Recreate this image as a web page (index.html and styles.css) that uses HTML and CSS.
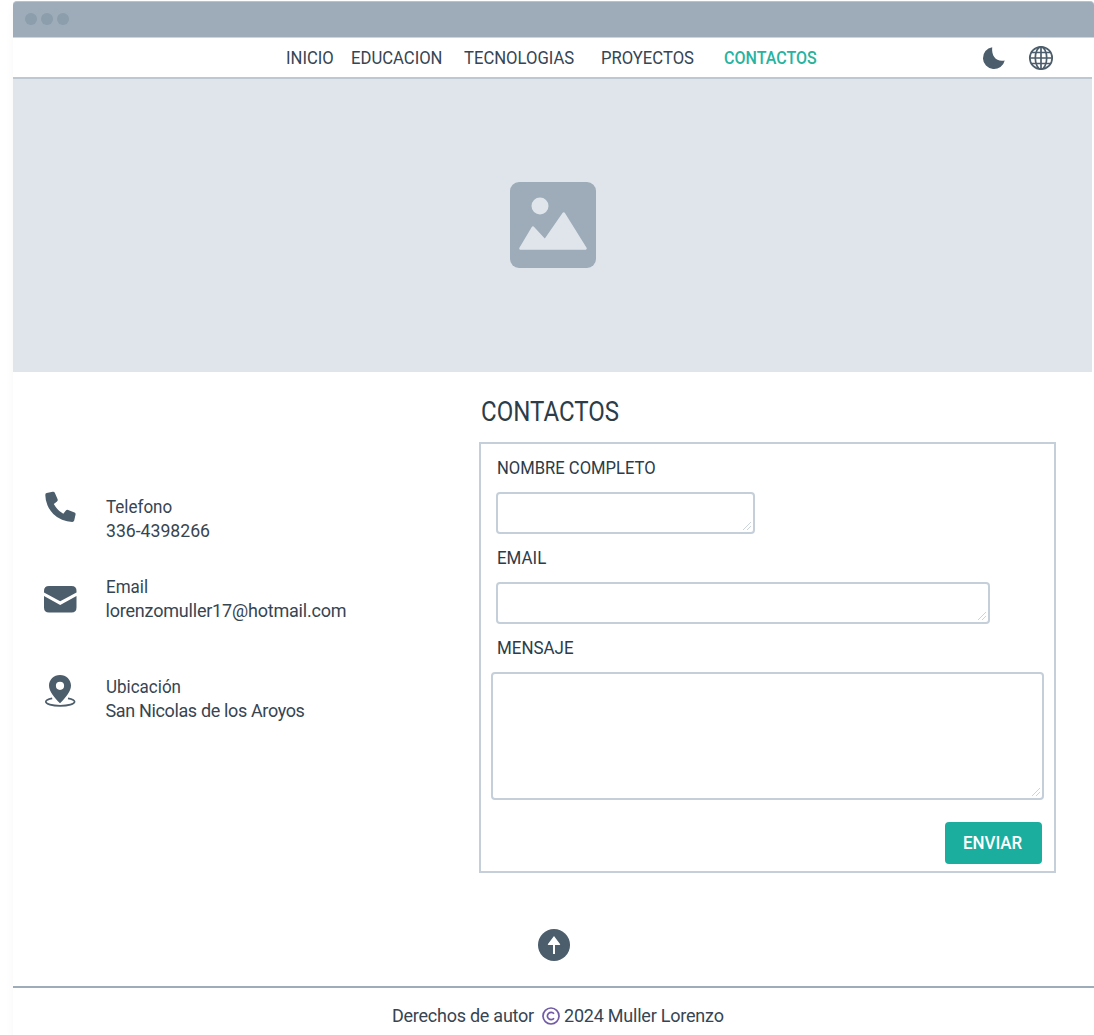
FILE: index.html
```html
<!DOCTYPE html>
<html lang="es">
<head>
<meta charset="utf-8">
<title>Contactos</title>
<link rel="stylesheet" href="styles.css">
</head>
<body>
<div class="window">
  <div class="titlebar"><i></i><i></i><i></i></div>
  <header class="nav">
    <nav class="links">
      <a class="inicio">INICIO</a>
      <a class="educacion">EDUCACION</a>
      <a class="tecnologias">TECNOLOGIAS</a>
      <a class="proyectos">PROYECTOS</a>
      <a class="active">CONTACTOS</a>
    </nav>
    <div class="tools">
      <svg width="24" height="24" viewBox="0 0 24 24"><path fill="currentColor" d="M10.200 1.200A11 11 0 1 0 22.700 14.400C14.500 16 9.300 10.500 10.200 1.200Z"/></svg>
      <svg width="26" height="26" viewBox="0 0 26 26" fill="none" stroke="currentColor" stroke-width="1.7"><circle cx="13" cy="13" r="11.2"/><ellipse cx="13" cy="13" rx="5.700" ry="11.200"/><path d="M13 1.800v22.400M1.800 13h22.400M3.500 7.500h19M3.500 18.500h19"/></svg>
    </div>
  </header>
  <section class="hero">
    <svg width="86" height="86" viewBox="0 0 86 86"><rect width="86" height="86" rx="9" fill="#9dacb8"/><circle cx="30" cy="24" r="8.500" fill="#e0e5ec"/><path d="M10.500 66.500 23 45.500 35 58.500 53.700 31.500 75.500 66.500Z" fill="#e0e5ec" stroke="#e0e5ec" stroke-width="2.500" stroke-linejoin="round"/></svg>
  </section>
  <main class="content">
    <ul class="contact-list">
      <li class="phone">
        <svg width="34" height="34" viewBox="0 0 34 34"><path fill="currentColor" d="M3.700 3.100 9.700 1.700Q11.200 1.400 11.800 2.800L14.600 9.200Q15.100 10.500 14 11.400L10.800 14.100Q14.300 20.600 20.300 23.700L22.900 20.400Q23.800 19.300 25.100 19.900L31.500 22.600Q32.900 23.200 32.500 24.700L31.200 30.600Q30.800 32 29.300 32A27.500 27.500 0 0 1 2.300 4.900Q2.300 3.400 3.700 3.100Z"/></svg>
        <p><span class="label">Telefono</span><span class="number">336-4398266</span></p>
      </li>
      <li class="mail">
        <svg width="34" height="34" viewBox="0 0 34 34"><g fill="currentColor"><path d="M1 10.500V9Q1 4 6 4H28.500Q33.500 4 33.500 9V10.500L17.200 19.200Z"/><path d="M1 13.900 17.200 23 33.500 13.900V25.500Q33.500 30.500 28.500 30.500H6Q1 30.500 1 25.500Z"/></g></svg>
        <p><span class="label">Email</span><span class="address">lorenzomuller17@hotmail.com</span></p>
      </li>
      <li class="place">
        <svg width="34" height="34" viewBox="0 0 34 34"><path fill="currentColor" fill-rule="evenodd" d="M17 1C10.800 1 6 5.700 6 11.600C6 17.500 11.500 24 17 29.300C22.500 24 28 17.500 28 11.600C28 5.700 23.200 1 17 1ZM17 7.700A4.100 4.100 0 1 1 17 15.900A4.100 4.100 0 1 1 17 7.700Z"/><path d="M9.200 24.300C5 25.100 2.800 26.300 2.800 27.700C2.800 30 9 31.800 17.200 31.800S31.600 30 31.600 27.700C31.600 26.300 29.200 25.100 25 24.300" fill="none" stroke="currentColor" stroke-width="1.700"/></svg>
        <p><span class="label">Ubicación</span><span class="city">San Nicolas de los Aroyos</span></p>
      </li>
    </ul>
    <section class="contact">
      <h1><span>CONTACTOS</span></h1>
      <form>
        <label for="name" class="name-label">NOMBRE COMPLETO</label>
        <div class="field short" id="name"><svg width="10" height="10"><path d="M1 9 9 1M5 9 9 5"/></svg></div>
        <label for="email">EMAIL</label>
        <div class="field" id="email"><svg width="10" height="10"><path d="M1 9 9 1M5 9 9 5"/></svg></div>
        <label for="message">MENSAJE</label>
        <div class="field message" id="message"><svg width="10" height="10"><path d="M1 9 9 1M5 9 9 5"/></svg></div>
        <button type="button"><span>ENVIAR</span></button>
      </form>
    </section>
  </main>
  <div class="to-top"><svg width="32" height="32" viewBox="0 0 32 32"><circle cx="16" cy="16" r="16" fill="#4c5d6b"/><path fill="#fff" d="M16 7 22.200 15.200Q22.300 16 21.500 16H17V25H15V16H10.500Q9.700 16 9.800 15.200Z"/></svg></div>
  <footer>
    <span class="rights">Derechos de autor</span>
    <svg width="18" height="18" viewBox="0 0 18 18" fill="none" stroke="#715ba5" stroke-width="1.700"><circle cx="9" cy="9" r="8"/><path d="M12 6.700A3.700 3.700 0 1 0 12 11.300"/></svg>
    <span class="owner">2024 Muller Lorenzo</span>
  </footer>
</div>
</body>
</html>
```
FILE: styles.css
```css
* { box-sizing: border-box; }
body {
  margin: 0;
  padding: 1px 0 0 13px;
  height: 1035px;
  overflow: hidden;
  background: #fff;
  color: #364552;
  font: 18px/24px Roboto, "Liberation Sans", sans-serif;
}
.window { height: 1034px; background: #fff; box-shadow: 0 5px 8px rgba(0, 0, 0, .04); border-radius: 4px 4px 0 0; }
.titlebar {
  display: flex;
  align-items: center;
  gap: 4px;
  height: 37px;
  padding: 0 0 1px 12px;
  background: #9dacb8;
  border: 1px solid #b7c3cc;
  border-width: 1px 0;
  border-bottom-color: #ced6dc;
  border-radius: 4px 4px 0 0;
}
.titlebar i { width: 12px; height: 12px; border-radius: 50%; background: #8c9dac; }
.nav {
  display: flex;
  justify-content: space-between;
  align-items: center;
  width: 1079px;
  height: 41px;
  padding: 0 38.500px 0 273px;
  border-bottom: 2px solid #bdc8d1;
}
.links { display: flex; }
.links a { height: 24px; transform: scaleX(.925); transform-origin: left; white-space: nowrap; }
.links .inicio { width: 65px; }
.links .educacion { width: 113px; }
.links .tecnologias { width: 137px; }
.links .proyectos { width: 123px; }
.links .active { width: 94px; color: #27b39f; font-weight: 500; transform: scaleX(.89); }
.tools { display: flex; align-items: center; gap: 22px; color: #4c5d6b; }
.hero { display: flex; justify-content: center; align-items: center; width: 1079px; height: 293px; padding-bottom: 1px; background: #e0e5ec; }
.content { display: flex; height: 557px; }
.contact-list { width: 466px; margin: 0; padding: 118px 0 0 30px; list-style: none; }
.contact-list li { display: flex; gap: 28.500px; color: #4c5d6b; }
.contact-list p { margin: 5px 0 0; color: #364552; }
.contact-list span { display: block; white-space: nowrap; transform-origin: left; }
.phone { height: 80px; }
.mail { height: 100px; }
.mail svg { margin-top: 12px; }
.place svg { margin-top: 4px; }
.label { transform: scaleX(.945); }
.number { transform: scaleX(.98); }
.address { letter-spacing: -.2px; }
.city { letter-spacing: -.36px; }
.contact { width: 576.500px; padding-top: 23px; }
h1 { height: 47px; margin: 0; padding-left: 1.500px; font-size: 27px; line-height: 34px; font-weight: 400; color: #2c3c49; }
h1 span { display: block; width: 157px; transform: scaleX(.89); transform-origin: left; }
form {
  display: flex;
  flex-direction: column;
  height: 431px;
  padding: 10px 12px 7px 10px;
  border: 2px solid #c5cfd9;
}
label { align-self: flex-start; height: 24px; margin: 2px 0 12px 6px; transform: scaleX(.94); transform-origin: left; white-space: nowrap; color: #2c3c49; }
.name-label { transform: scaleX(.922); }
.field {
  display: flex;
  justify-content: flex-end;
  align-items: flex-end;
  width: 493.500px;
  height: 42px;
  margin: 0 0 10px 5px;
  padding: 1px;
  border: 2px solid #c5cfd9;
  border-radius: 4px;
}
.field svg { fill: none; stroke: #ccd5dd; }
.field.short { width: 258.500px; }
.field.message { width: 552.500px; height: 128px; margin: 0 0 22px; }
button {
  align-self: flex-end;
  width: 97px;
  height: 42px;
  padding: 0;
  border: 0;
  border-radius: 4px;
  background: #1bae9f;
  color: #fff;
  font: 500 18px/42px Roboto, "Liberation Sans", sans-serif;
}
button span { display: inline-block; transform: scaleX(.94); }
.to-top { display: flex; justify-content: center; height: 59px; border-bottom: 2px solid #9dacb8; }
footer { display: flex; align-items: center; height: 46px; padding: 9px 0 0 379px; }
footer span { white-space: nowrap; }
footer svg { margin: 1px 4px 0 0; }
.rights { width: 150px; letter-spacing: -.25px; }
.owner { letter-spacing: -.22px; }
```
